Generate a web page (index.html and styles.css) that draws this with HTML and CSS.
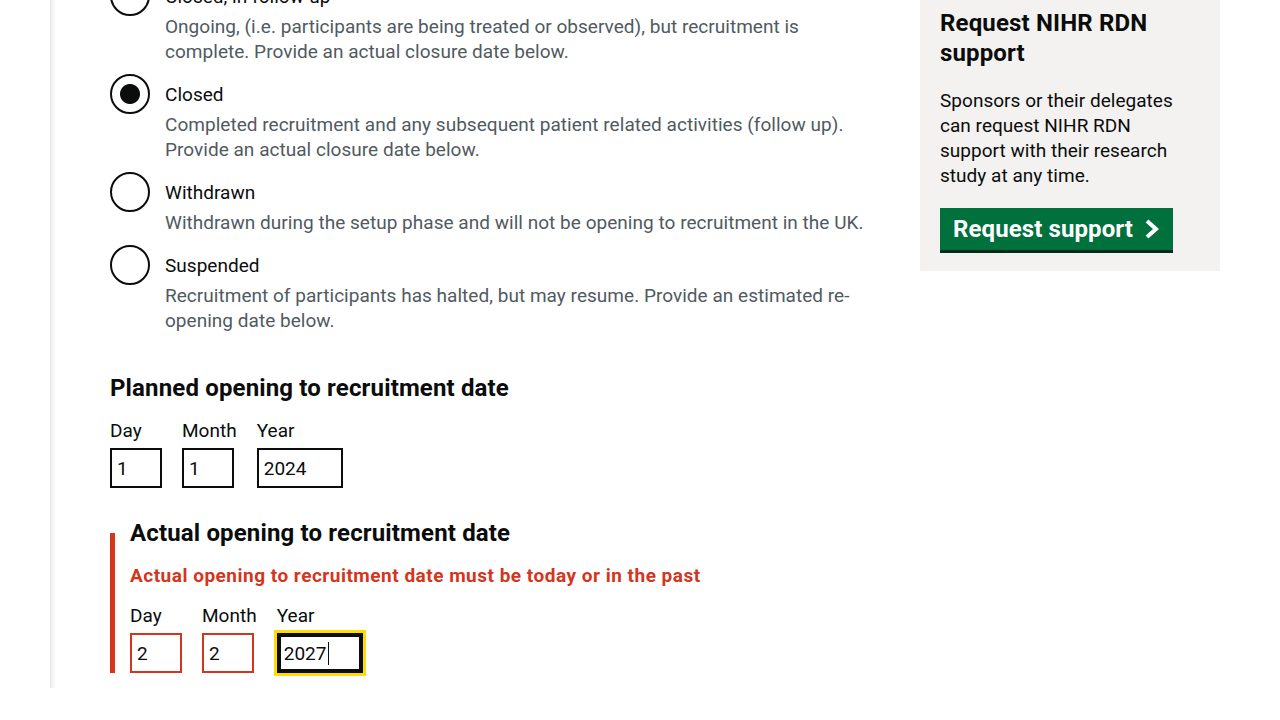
FILE: index.html
```html
<!DOCTYPE html>
<html lang="en">
<head>
<meta charset="utf-8">
<title>Study status</title>
<link rel="stylesheet" href="styles.css">
</head>
<body>
<div class="page">
  <main class="main">
    <fieldset class="radios">
      <div class="radio-item">
        <input class="radio-input" type="radio" name="status" id="s1">
        <label class="radio-label" for="s1">Closed, in follow-up</label>
        <div class="hint">Ongoing, (i.e. participants are being treated or observed), but recruitment is complete. Provide an actual closure date below.</div>
      </div>
      <div class="radio-item">
        <input class="radio-input" type="radio" name="status" id="s2" checked>
        <label class="radio-label" for="s2">Closed</label>
        <div class="hint">Completed recruitment and any subsequent patient related activities (follow up). Provide an actual closure date below.</div>
      </div>
      <div class="radio-item">
        <input class="radio-input" type="radio" name="status" id="s3">
        <label class="radio-label" for="s3">Withdrawn</label>
        <div class="hint">Withdrawn during the setup phase and will not be opening to recruitment in the UK.</div>
      </div>
      <div class="radio-item">
        <input class="radio-input" type="radio" name="status" id="s4">
        <label class="radio-label" for="s4">Suspended</label>
        <div class="hint">Recruitment of participants has halted, but may resume. Provide an estimated re-opening date below.</div>
      </div>
    </fieldset>

    <fieldset class="date-group">
      <legend class="legend">Planned opening to recruitment date</legend>
      <div class="date-inputs">
        <div class="date-item">
          <label class="date-label" for="p-day">Day</label>
          <input class="input w2" id="p-day" type="text" value="1">
        </div>
        <div class="date-item">
          <label class="date-label" for="p-month">Month</label>
          <input class="input w2" id="p-month" type="text" value="1">
        </div>
        <div class="date-item">
          <label class="date-label" for="p-year">Year</label>
          <input class="input w4" id="p-year" type="text" value="2024">
        </div>
      </div>
    </fieldset>

    <fieldset class="date-group error-group">
      <legend class="legend">Actual opening to recruitment date</legend>
      <p class="error-message">Actual opening to recruitment date must be today or in the past</p>
      <div class="date-inputs">
        <div class="date-item">
          <label class="date-label" for="a-day">Day</label>
          <input class="input w2 input-error" id="a-day" type="text" value="2">
        </div>
        <div class="date-item">
          <label class="date-label" for="a-month">Month</label>
          <input class="input w2 input-error" id="a-month" type="text" value="2">
        </div>
        <div class="date-item">
          <label class="date-label" for="a-year">Year</label>
          <span class="caret-wrap"><input class="input w4 is-focused" id="a-year" type="text" value="2027"></span>
        </div>
      </div>
    </fieldset>
  </main>

  <aside class="sidebar">
    <h2 class="side-title">Request NIHR RDN support</h2>
    <p class="side-text">Sponsors or their delegates can request NIHR RDN support with their research study at any time.</p>
    <a class="button" href="#">Request support
      <svg class="chev" width="18" height="22" viewBox="0 0 18 22" aria-hidden="true"><polyline points="4,3 13,11 4,19" fill="none" stroke="#ffffff" stroke-width="4"/></svg>
    </a>
  </aside>
</div>
</body>
</html>
```

FILE: styles.css
```css
* { box-sizing: border-box; }

html, body {
  margin: 0;
  padding: 0;
  background: #ffffff;
}

body {
  font-family: Roboto, "Liberation Sans", Arial, sans-serif;
  color: #0b0c0c;
  font-size: 19px;
  line-height: 25px;
  letter-spacing: 0.03px;
  overflow: hidden;
}

.page {
  margin-left: 50px;
  margin-top: -24px;
  padding: 0 60px 15px 60px;
  display: flex;
  align-items: flex-start;
  gap: 40px;
  background: linear-gradient(to right, #e6e6e6 0, #f1f1f1 2px, #f9f9f9 4px, #ffffff 6px);
}

.main {
  flex: 1;
  min-width: 0;
}

fieldset {
  border: 0;
  margin: 0;
  padding: 0;
  min-width: 0;
}

.radios {
  margin-bottom: 40px;
}

.radio-item {
  display: grid;
  grid-template-columns: 40px 1fr;
  margin-bottom: 10px;
}

.radio-item:last-child {
  margin-bottom: 0;
}

.radio-input {
  appearance: none;
  -webkit-appearance: none;
  grid-row: 1 / span 2;
  grid-column: 1;
  align-self: start;
  width: 40px;
  height: 40px;
  margin: 0;
  border: 2px solid #0b0c0c;
  border-radius: 50%;
  background: #ffffff;
}

.radio-input:checked {
  background: radial-gradient(circle at center, #0b0c0c 0, #0b0c0c 9.5px, #ffffff 10.5px);
}

.radio-label {
  grid-column: 2;
  padding: 8px 15px 5px;
}

.hint {
  grid-column: 2;
  padding-left: 15px;
  color: #505a5f;
}

.legend {
  padding: 0;
  font-size: 24px;
  line-height: 30px;
  font-weight: 700;
  letter-spacing: 0.15px;
  margin-bottom: 15px;
}

.date-group {
  margin-bottom: 30px;
}

.error-group {
  border-left: 5px solid #d4351c;
  padding-left: 15px;
  margin-bottom: 0;
}

.error-message {
  margin: 0 0 15px;
  color: #d4351c;
  font-weight: 700;
  letter-spacing: 0.5px;
}

.date-inputs {
  display: flex;
  align-items: flex-start;
}

.date-item {
  display: flex;
  flex-direction: column;
  align-items: flex-start;
  margin-right: 20px;
}

.date-label {
  display: block;
  margin-bottom: 5px;
}

.input {
  height: 40px;
  margin: 0;
  padding: 5px;
  border: 2px solid #0b0c0c;
  border-radius: 0;
  font-family: Roboto, "Liberation Sans", Arial, sans-serif;
  font-size: 19px;
  line-height: 25px;
  color: #0b0c0c;
  background: #ffffff;
  outline: none;
}

.w2 { width: 52px; }
.w4 { width: 86px; }

.input-error {
  border-color: #d4351c;
}

.is-focused {
  outline: 3px solid #ffdd00;
  outline-offset: 0;
  box-shadow: inset 0 0 0 2px #0b0c0c;
}

.caret-wrap {
  position: relative;
  display: inline-block;
}

.caret-wrap::after {
  content: "";
  position: absolute;
  left: 51px;
  top: 9px;
  width: 1px;
  height: 23px;
  background: #0b0c0c;
}

.sidebar {
  width: 300px;
  flex: none;
  margin-top: 12px;
  padding: 20px 20px 21px;
  background: #f3f2f1;
}

.side-title {
  margin: 0 0 20px;
  font-size: 24px;
  line-height: 30px;
  font-weight: 700;
  letter-spacing: 0.15px;
}

.side-text {
  margin: 0 0 20px;
}

.button {
  display: inline-flex;
  align-items: center;
  padding: 9px 12px 9px 13px;
  background: #00703c;
  color: #ffffff;
  text-decoration: none;
  font-size: 24px;
  line-height: 24px;
  font-weight: 700;
  letter-spacing: 0.1px;
  box-shadow: 0 3px 0 #002d18;
}

.chev {
  margin-left: 10px;
}
```
